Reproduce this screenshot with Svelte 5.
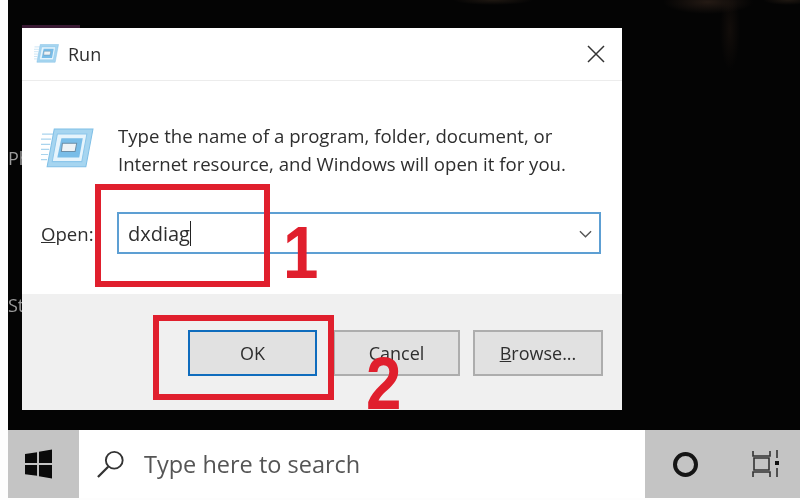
<script>
    const message = ['Type the name of a program, folder, document, or', 'Internet resource, and Windows will open it for you.'];
</script>

{#snippet runIcon(size)}
    <svg class="run-icon" viewBox="0 0 52 40" width={size} height={size * 40 / 52}>
        <g stroke="#a9d4ee" stroke-width="1.2">
            <path d="M1 6h12M0 11h10M0 16h9M0 21h8M0 26h7M0 31h6" />
        </g>
        <path d="M13 1h38l-7 37H6z" fill="#a6d5f0" stroke="#7fbfe6" />
        <path d="M16 6h29l-5 27H11z" fill="#e6f4fc" stroke="#8cc6ea" />
        <path d="M20 10h21l-3.500 19H16z" fill="#79bde8" />
        <path d="M21 15h14l-1.500 8H20z" fill="#eef3f6" stroke="#6c8fa8" />
    </svg>
{/snippet}

<div class="screen">
    <main class="desktop">
        <span class="edge-label ph">Ph</span>
        <span class="edge-label st">St</span>
        <div class="dialog">
            <header class="titlebar">
                {@render runIcon(25)}
                <span class="title">Run</span>
                <svg class="close" viewBox="0 0 18 18" width="18" height="18">
                    <path d="M1 1l16 16M17 1L1 17" fill="none" stroke="#333" stroke-width="1.500" />
                </svg>
            </header>

            <section class="body">
                <div class="intro">
                    {@render runIcon(53)}
                    <p>{message[0]}<br />{message[1]}</p>
                </div>
                <div class="open-row">
                    <span class="open-label"><u>O</u>pen:</span>
                    <div class="combo">
                        <span class="value">dxdiag</span><span class="caret"></span>
                        <svg class="chevron" viewBox="0 0 14 8" width="13" height="8">
                            <path d="M1 1l6 6 6-6" fill="none" stroke="#555" stroke-width="1.500" />
                        </svg>
                    </div>
                </div>
            </section>

            <footer class="actions">
                <button class="primary">OK</button>
                <button class="cancel">Cancel</button>
                <button class="browse"><u>B</u>rowse...</button>
            </footer>

            <div class="mark mark-one"></div>
            <div class="mark mark-two"></div>
            <span class="step step-one">1</span>
            <span class="step step-two">2</span>
        </div>
    </main>

    <nav class="taskbar">
        <div class="start">
            <svg viewBox="0 0 28 30" width="27" height="30">
                <path d="M0 4.500l12.500-1.800v11.300H0zM14.500 2.400L28 0v14H14.500zM0 16h12.500v11.300L0 25.500zM14.500 16H28v14l-13.500-2.400z" fill="#0a0a0a" />
            </svg>
        </div>
        <div class="search">
            <svg viewBox="0 0 30 30" width="28" height="28">
                <circle cx="18.500" cy="11" r="9" fill="none" stroke="#333" stroke-width="2" />
                <path d="M12 18L1 29" stroke="#333" stroke-width="2.400" />
            </svg>
            <span>Type here to search</span>
        </div>
        <div class="tray">
            <span class="cortana"></span>
            <svg viewBox="0 0 28 28" width="28" height="28">
                <path d="M1 1v5h17V1M2 8h15v12H2zM1 27v-5h17v5" fill="none" stroke="#333" stroke-width="1.600" />
                <path d="M25 0v8M25 18v9" stroke="#333" stroke-width="1.600" />
                <rect x="23" y="11" width="4" height="4" fill="#111" />
            </svg>
        </div>
    </nav>
</div>

<style>
    :global(body) {
        margin: 0;
        background: #fdfdfd;
    }

    .screen {
        width: 800px;
        height: 500px;
        overflow: hidden;
        font-family: "Open Sans", "Noto Sans", sans-serif;
        color: #2e2e2e;
        filter: blur(0.45px);
    }

    .desktop {
        position: relative;
        height: 430px;
        box-sizing: border-box;
        margin-left: 8px;
        padding: 28px 0 0 14px;
        background:
            radial-gradient(ellipse 45px 12px at 700px 2px, #241a14, transparent),
            radial-gradient(ellipse 10px 40px at 722px 30px, #120d0a, transparent),
            radial-gradient(ellipse 40px 5px at 485px 0, #1f1812, transparent),
            radial-gradient(ellipse 25px 5px at 780px 0, #1f1812, transparent),
            #040404;
    }

    .edge-label {
        position: absolute;
        left: 0;
        font-size: 18px;
        line-height: 22px;
        color: #9a9a9a;
    }

    .ph { top: 147px; }
    .st { top: 294px; }

    .dialog {
        position: relative;
        width: 600px;
        height: 382px;
        display: flex;
        flex-direction: column;
        background: #fff;
    }

    /* sliver of the window behind */
    .dialog::before {
        content: '';
        position: absolute;
        left: 0;
        top: -3px;
        width: 58px;
        height: 3px;
        background: #3a1a34;
    }

    .titlebar {
        height: 53px;
        box-sizing: border-box;
        display: flex;
        align-items: center;
        padding: 0 17px 0 12px;
        border-bottom: 1px solid #ececec;
    }

    .title {
        margin-left: 9px;
        font-size: 18px;
        flex: 1;
    }

    .body {
        height: 213px;
        box-sizing: border-box;
        padding: 0 21px 0 19px;
    }

    .intro {
        display: flex;
        align-items: flex-start;
        padding-top: 41px;
        height: 131px;
        box-sizing: border-box;
    }

    .intro .run-icon {
        margin-top: 6px;
    }

    .intro p {
        margin: 0 0 0 24px;
        font-size: 18.600px;
        line-height: 28px;
        white-space: nowrap;
    }

    .open-row {
        display: flex;
        align-items: center;
    }

    .open-label {
        width: 76px;
        font-size: 18.600px;
    }

    .combo {
        position: relative;
        flex: 1;
        height: 42px;
        box-sizing: border-box;
        border: 2px solid #5d9fd3;
        display: flex;
        align-items: center;
        padding-left: 9px;
        font-size: 20px;
    }

    .caret {
        width: 1px;
        height: 25px;
        background: #222;
    }

    .chevron {
        position: absolute;
        right: 7px;
        top: 16px;
    }

    .actions {
        flex: 1;
        background: #f0f0f0;
        display: flex;
        align-items: flex-start;
        padding: 36px 0 0 166px;
    }

    button {
        height: 46px;
        box-sizing: border-box;
        background: #e1e1e1;
        border: 2px solid #adadad;
        font: inherit;
        font-size: 18px;
        color: #2e2e2e;
        padding: 0;
    }

    .primary {
        width: 129px;
        border-color: #0f6cbd;
    }

    .cancel {
        width: 127px;
        margin-left: 16px;
    }

    .browse {
        width: 130px;
        margin-left: 13px;
    }

    .mark {
        position: absolute;
        box-sizing: border-box;
        border: 6px solid #e01f2d;
    }

    .mark-one {
        left: 73px;
        top: 156px;
        width: 175px;
        height: 103px;
    }

    .mark-two {
        left: 131px;
        top: 287px;
        width: 181px;
        height: 85px;
    }

    .step {
        position: absolute;
        font-family: "Liberation Sans", sans-serif;
        font-weight: 700;
        font-size: 74px;
        line-height: 74px;
        color: #e01f2d;
        transform: scaleX(0.86);
    }

    .step-one { left: 258px; top: 188px; }
    .step-two { left: 341px; top: 319px; }

    .taskbar {
        height: 68px;
        margin-left: 8px;
        display: flex;
        background: #c4c4c4;
    }

    .start {
        width: 71px;
        box-sizing: border-box;
        padding-left: 17px;
        display: flex;
        align-items: center;
    }

    .search {
        width: 566px;
        background: #fff;
        display: flex;
        align-items: center;
        gap: 19px;
        padding-left: 18px;
        box-sizing: border-box;
        font-size: 23.500px;
        color: #555;
    }

    .tray {
        flex: 1;
        display: flex;
        align-items: center;
        padding-left: 28px;
        gap: 54px;
    }

    .cortana {
        width: 25px;
        height: 25px;
        box-sizing: border-box;
        border: 4px solid #151515;
        border-radius: 50%;
    }
</style>
